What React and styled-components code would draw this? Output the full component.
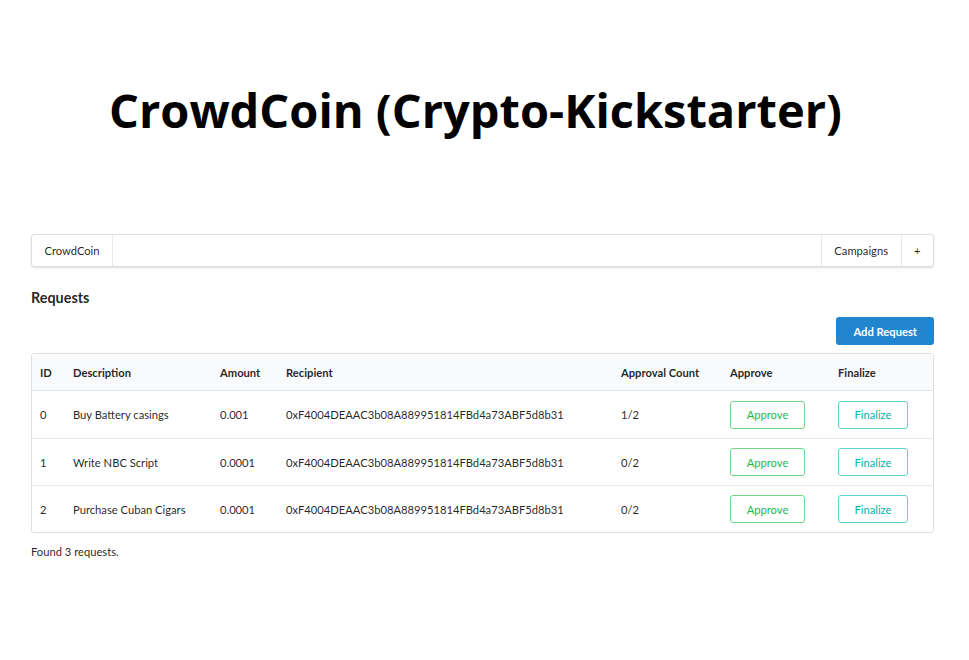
import React from 'react'
import styled, { createGlobalStyle } from 'styled-components'

const requests = [
  { id: 0, description: 'Buy Battery casings', amount: '0.001', recipient: '0xF4004DEAAC3b08A889951814FBd4a73ABF5d8b31', approvals: '1/2' },
  { id: 1, description: 'Write NBC Script', amount: '0.0001', recipient: '0xF4004DEAAC3b08A889951814FBd4a73ABF5d8b31', approvals: '0/2' },
  { id: 2, description: 'Purchase Cuban Cigars', amount: '0.0001', recipient: '0xF4004DEAAC3b08A889951814FBd4a73ABF5d8b31', approvals: '0/2' },
]

const columns = [
  { label: 'ID', width: 33 },
  { label: 'Description', width: 147 },
  { label: 'Amount', width: 66 },
  { label: 'Recipient', width: 335 },
  { label: 'Approval Count', width: 109 },
  { label: 'Approve', width: 108 },
  { label: 'Finalize', width: 103 },
]

const App = () => {
  return (
    <Page>
      <GlobalStyle />
      <Title>CrowdCoin (Crypto-Kickstarter)</Title>
      <Container>
        <Menu>
          <MenuItem>CrowdCoin</MenuItem>
          <Spacer />
          <MenuItem divider>Campaigns</MenuItem>
          <MenuItem divider>+</MenuItem>
        </Menu>

        <Heading>Requests</Heading>
        <Actions>
          <PrimaryButton>Add Request</PrimaryButton>
        </Actions>

        <Table>
          <colgroup>
            {columns.map((c) => (
              <col key={c.label} style={{ width: c.width }} />
            ))}
          </colgroup>
          <thead>
            <tr>
              {columns.map((c) => (
                <Th key={c.label}>{c.label}</Th>
              ))}
            </tr>
          </thead>
          <tbody>
            {requests.map((r) => (
              <Row key={r.id}>
                <Td>{r.id}</Td>
                <Td>{r.description}</Td>
                <Td>{r.amount}</Td>
                <Td>{r.recipient}</Td>
                <Td>{r.approvals}</Td>
                <Td>
                  <BasicButton color="#21ba45" border="#6fd68a" w={75}>Approve</BasicButton>
                </Td>
                <Td>
                  <BasicButton color="#00b5ad" border="#5fd2cc" w={70}>Finalize</BasicButton>
                </Td>
              </Row>
            ))}
          </tbody>
        </Table>

        <Footer>Found 3 requests.</Footer>
      </Container>
    </Page>
  )
}

export default App

const GlobalStyle = createGlobalStyle`
  body {
    margin: 0;
    background: #ffffff;
    font-family: Lato, "Helvetica Neue", Arial, sans-serif;
    color: rgba(0, 0, 0, 0.87);
  }
`

const Page = styled.div`
  width: 969px;
  min-height: 660px;
  padding-top: 80px;
  box-sizing: border-box;
`

const Title = styled.h1`
  margin: 0;
  padding-right: 18px;
  text-align: center;
  font-family: "Open Sans", sans-serif;
  font-weight: 700;
  font-size: 47px;
  line-height: 60px;
  color: #000;
`

const Container = styled.div`
  margin: 94px 35px 0 31px;
`

const Menu = styled.div`
  display: flex;
  height: 33px;
  border: 1px solid rgba(34, 36, 38, 0.15);
  border-radius: 3px;
  box-shadow: 0 1px 2px 0 rgba(34, 36, 38, 0.15);
  box-sizing: border-box;
  font-size: 11.2px;
`

const MenuItem = styled.div`
  display: flex;
  align-items: center;
  padding: 0 12.5px;
  border-left: ${(p) => (p.divider ? '1px solid rgba(34, 36, 38, 0.1)' : 'none')};
  border-right: ${(p) => (p.divider ? 'none' : '1px solid rgba(34, 36, 38, 0.1)')};
  color: rgba(0, 0, 0, 0.87);
`

const Spacer = styled.div`
  flex: 1;
`

const Heading = styled.h3`
  margin: 21px 0 0;
  font-size: 14.4px;
  font-weight: 700;
  line-height: 20px;
`

const Actions = styled.div`
  display: flex;
  justify-content: flex-end;
  margin-top: 9px;
`

const PrimaryButton = styled.button`
  height: 28px;
  padding: 0 17px;
  border: 0;
  border-radius: 3px;
  background: #2185d0;
  color: #fff;
  font-family: Lato, sans-serif;
  font-weight: 700;
  font-size: 11.2px;
`

const Table = styled.table`
  width: 100%;
  margin-top: 8px;
  table-layout: fixed;
  border-collapse: separate;
  border-spacing: 0;
  border: 1px solid rgba(34, 36, 38, 0.15);
  border-radius: 3px;
  font-size: 11.2px;
`

const Th = styled.th`
  height: 36px;
  padding: 0 0 0 8px;
  text-align: left;
  font-weight: 700;
  background: #f9fafb;
  border-bottom: 1px solid rgba(34, 36, 38, 0.1);
  color: rgba(0, 0, 0, 0.87);
`

const Row = styled.tr`
  & + & td {
    border-top: 1px solid rgba(34, 36, 38, 0.1);
  }
`

const Td = styled.td`
  height: 47px;
  padding: 0 0 0 8px;
  box-sizing: border-box;
  vertical-align: middle;
`

const BasicButton = styled.button`
  width: ${(p) => p.w}px;
  height: 28px;
  padding: 0;
  background: #fff;
  border: 1px solid ${(p) => p.border};
  border-radius: 3px;
  color: ${(p) => p.color};
  font-family: Lato, sans-serif;
  font-size: 11.2px;
`

const Footer = styled.p`
  margin: 12px 0 0;
  font-size: 11.2px;
`
